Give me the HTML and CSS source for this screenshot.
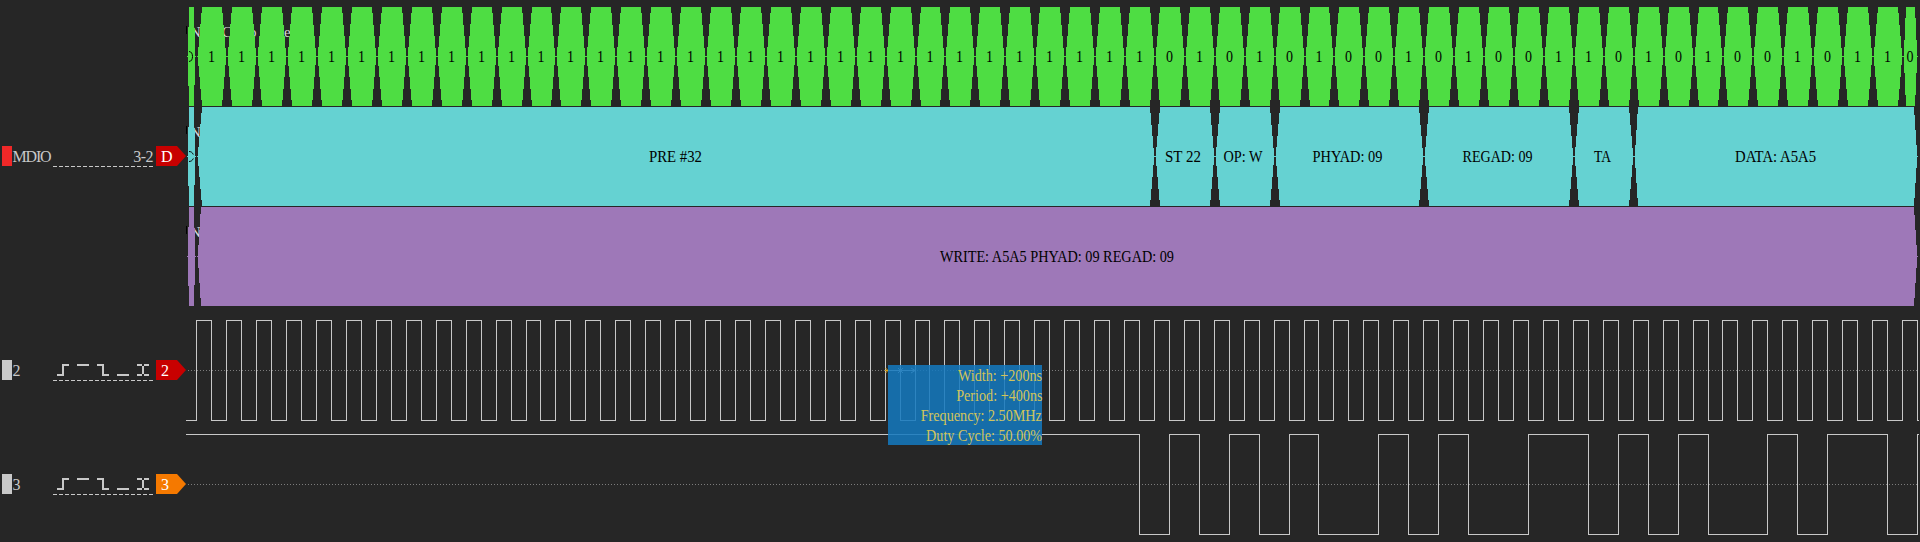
FILE: index.html
```html
<!DOCTYPE html>
<html lang="en">
<head>
<meta charset="utf-8">
<title>MDIO capture</title>
<link rel="stylesheet" href="styles.css">
</head>
<body>
<main class="analyzer">
  <aside class="channels">
    <section class="channel channel-bus">
      <span class="swatch swatch-red"></span><span class="name">MDIO</span>
      <span class="trigger trigger-text">3-2</span>
      <span class="tag tag-red">D</span>
    </section>
    <section class="channel channel-clock">
      <span class="swatch"></span><span class="name">2</span>
      <span class="trigger"><svg class="edges" width="100" height="14"><path d="M4 12H10M10 13V1M10 2H16M24 2H36M44 2H50M50 1V13M50 12H56M64 12H76M84 2H89M91 2H96M84 12H89M91 12H96M90 3V11"/></svg></span>
      <span class="tag tag-red">2</span>
    </section>
    <section class="channel channel-data">
      <span class="swatch"></span><span class="name">3</span>
      <span class="trigger"><svg class="edges" width="100" height="14"><path d="M4 12H10M10 13V1M10 2H16M24 2H36M44 2H50M50 1V13M50 12H56M64 12H76M84 2H89M91 2H96M84 12H89M91 12H96M90 3V11"/></svg></span>
      <span class="tag tag-orange">3</span>
    </section>
  </aside>
  <div class="plots">
    <svg class="plot" id="plot" width="1734" height="542" viewBox="186 0 1734 542"></svg>
    <div class="measure">
      <span>Width: +200ns</span><span>Period: +400ns</span><span>Frequency: 2.50MHz</span><span>Duty Cycle: 50.00%</span>
    </div>
  </div>
</main>
<script src="plot.js"></script>
</body>
</html>
```
FILE: styles.css
```css
body { margin: 0; background: #262626; color: #c8c8c8; font: 16px/20px "Liberation Serif", serif; }
.analyzer { display: flex; width: 1920px; height: 542px; overflow: hidden; }
.channels { width: 186px; flex: none; display: flex; flex-direction: column; }
.channel { display: flex; align-items: flex-start; height: 22px; padding-left: 2px; }
.channel-bus { margin-top: 146px; }
.channel-clock { margin-top: 192px; }
.channel-data { margin-top: 92px; }
.swatch { width: 10px; height: 20px; background: #c8c8c8; flex: none; }
.swatch-red { background: #f02828; }
.name { width: 41px; height: 20px; line-height: 21px; letter-spacing: -1.2px; white-space: nowrap; padding-left: 0.5px; box-sizing: border-box; }
.trigger { width: 100px; height: 21px; text-align: right; box-sizing: border-box;
  background: repeating-linear-gradient(90deg, #c8c8c8 0 4px, transparent 4px 6px) left bottom / 100% 1px no-repeat; }
.trigger-text { line-height: 21px; letter-spacing: -0.5px; }
.edges { display: block; margin-top: 3px; fill: none; stroke: #c8c8c8; stroke-width: 2; shape-rendering: crispEdges; }
.tag { width: 30px; height: 20px; margin-left: 3px; padding-left: 5px; box-sizing: border-box; color: #fff; line-height: 21px; clip-path: polygon(0 0, 21px 0, 100% 50%, 21px 100%, 0 100%); }
.tag-red { background: #c80000; }
.tag-orange { background: #f57900; }
.plots { position: relative; flex: none; width: 1734px; }
.plot { display: block; }
.bit, .field, .frame { shape-rendering: crispEdges; }
.bit { fill: #4edd43; }
.field { fill: #65d2d2; }
.frame { fill: #9e78b8; }
.label { fill: #000; font-size: 16px; }
.clipped { fill: none; stroke: #000; }
.row-name { fill: #d8d8d8; font-size: 15px; }
.wave { fill: none; stroke: #c8c8c8; shape-rendering: crispEdges; }
.center { fill: none; stroke: #7c7c7c; stroke-dasharray: 1 2; shape-rendering: crispEdges; }
.marker { fill: none; stroke: #d8a018; }
.marker-line { fill: none; stroke: #c8c8c8; }
.measure { position: absolute; left: 702px; top: 365px; width: 154px; height: 80px; display: flex; flex-direction: column; align-items: flex-end; background: rgba(20, 121, 191, 0.86); color: #d2c45a; line-height: 21px; white-space: nowrap; }
.measure span { height: 20px; transform: scaleX(0.885); transform-origin: right center; }
```
FILE: plot.js
```js
const svg = document.getElementById('plot');
const NS = 'http://www.w3.org/2000/svg';

function add(tag, attrs, text) {
  const el = document.createElementNS(NS, tag);
  for (const k in attrs) el.setAttribute(k, attrs[k]);
  if (text !== undefined) el.textContent = text;
  svg.appendChild(el);
}

// x of the n-th clock transition
const edge = n => 196 + 15 * n - Math.floor((n + 4.3) / 26.4);
const cellStart = k => (k >= 58 ? 1918 : edge(2 * k) + 1);

function cell(cls, a, b, y, inset) {
  const m = y + 49.5, e = y + 99, l = a + 0.8, r = b - 0.8;
  const p = [[a, m], [l, m - 1], [a + inset, y], [b - inset, y], [r, m - 1], [b, m],
    [r, m + 1], [b - inset, e], [a + inset, e], [l, m + 1]];
  add('polygon', { class: cls, points: p.map(q => q.join()).join(' ') });
}

function label(text, x, y, width) {
  add('text', { class: 'label', x, y, textLength: width, lengthAdjust: 'spacingAndGlyphs' }, text);
}

for (const y of [37, 137, 237]) add('text', { class: 'row-name', x: 190, y }, 'N');
add('text', { class: 'row-name', x: 222, y: 37 }, 'C');
add('text', { class: 'row-name', x: 249, y: 37 }, 'o');
add('text', { class: 'row-name', x: 284, y: 37 }, 'e');
for (const y of [26, 126, 226]) add('rect', { x: 186, y, width: 1, height: 8, fill: '#000' });

const bits = '1'.repeat(32) + '01010100101001101010010110';
cell('bit', 187, 196, 7, 2);
add('path', { class: 'clipped', d: 'M189 51.5C191.5 51.5 192.5 54 192.5 56.5S191.5 61.5 189 61.5' });
[...bits].forEach((b, k) => {
  const a = cellStart(k), e = cellStart(k + 1);
  cell('bit', a, e, 7, k === 57 ? 3 : 5);
  label(b, (a + e) / 2 - 4, 62, 7);
});

cell('field', 187, 196, 107, 2);
add('path', { class: 'clipped', d: 'M189 151.5C191 151.5 192.5 152.5 193.3 154.5M193.3 158.5C192.5 160.5 191 161.5 189 161.5' });
const fields = [
  [0, 32, 'PRE #32', 649, 53], [32, 34, 'ST 22', 1165, 36], [34, 36, 'OP: W', 1223.5, 39],
  [36, 41, 'PHYAD: 09', 1312.5, 70], [41, 46, 'REGAD: 09', 1462.5, 70],
  [46, 48, 'TA', 1594, 17], [48, 58, 'DATA: A5A5', 1735, 81]
];
for (const [a, b, t, x, w] of fields) {
  cell('field', cellStart(a), cellStart(b), 107, b === 58 ? 4 : 5);
  label(t, x, 162, w);
}

cell('frame', 187, 196, 207, 2);
cell('frame', 197, 1918, 207, 4);
label('WRITE: A5A5 PHYAD: 09 REGAD: 09', 940, 262, 234);

add('path', { class: 'center', d: 'M188 370.5H1918' });
add('path', { class: 'center', d: 'M188 484.5H1918' });

function wave(edges, high, top) {
  const y = h => (h ? top : top + 100) + 0.5;
  let d = `M186 ${y(high)}`;
  for (const n of edges) {
    const x = edge(n) + 0.5;
    d += `H${x}`;
    high = !high;
    d += `V${y(high)}`;
  }
  add('path', { class: 'wave', d: d + 'H1919' });
}
wave(Array.from({ length: 116 }, (_, n) => n), false, 320);
wave([63, 65, 67, 69, 71, 73, 75, 79, 81, 83, 85, 89, 93, 95, 97, 99, 101, 105, 107, 109, 113, 115], true, 434);

add('path', { class: 'marker-line', d: 'M888 370.5H915M898 368L903 373M898 373L903 368M911 368L915 370.5L911 373' });
add('path', { class: 'marker', d: 'M885.5 368L888 370.5L885.5 373M885 370.5H888' });
```
